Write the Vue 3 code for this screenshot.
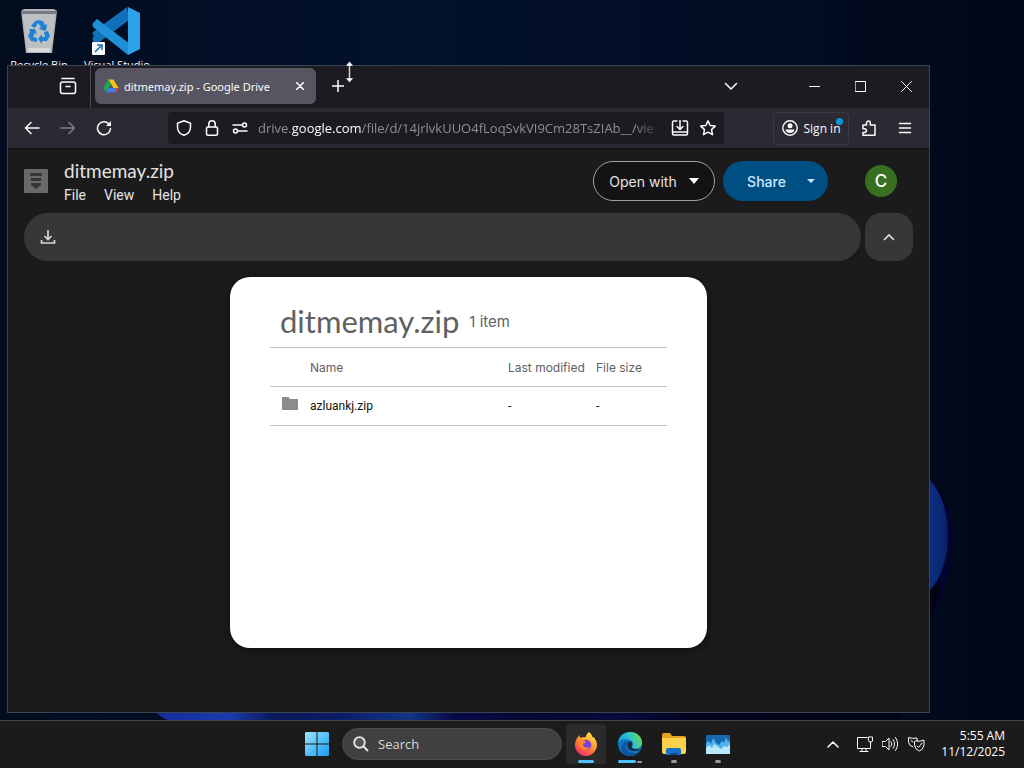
<script setup>
import { ref } from 'vue'

const url = ref('drive.google.com/file/d/14jrlvkUUO4fLoqSvkVI9Cm28TsZIAb__/vie')
const query = ref('')
const menus = ['File', 'View', 'Help']
const rows = [{ name: 'azluankj.zip', modified: '-', size: '-' }]
</script>

<template>
  <div class="screen">
    <main class="desktop">
      <svg class="wallpaper" viewBox="0 0 1024 720" preserveAspectRatio="none" aria-hidden="true">
        <defs>
          <linearGradient id="sky" x1="0" y1="0" x2="1" y2="0">
            <stop offset="0" stop-color="#010c1e" />
            <stop offset="0.4" stop-color="#03112c" />
            <stop offset="0.7" stop-color="#020d24" />
            <stop offset="1" stop-color="#010817" />
          </linearGradient>
          <linearGradient id="petal" x1="0" y1="0" x2="1" y2="0">
            <stop offset="0" stop-color="#0e2f86" />
            <stop offset="0.7" stop-color="#0a2873" />
            <stop offset="1" stop-color="#091b60" />
          </linearGradient>
          <linearGradient id="strip" x1="0" y1="0" x2="1" y2="0">
            <stop offset="0" stop-color="#142a9c" />
            <stop offset="0.1" stop-color="#1a3cae" />
            <stop offset="0.16" stop-color="#0a1858" />
            <stop offset="0.25" stop-color="#0b1d68" />
            <stop offset="0.34" stop-color="#123586" />
            <stop offset="0.4" stop-color="#080a48" />
            <stop offset="0.52" stop-color="#05082e" />
            <stop offset="0.62" stop-color="#070a3c" />
            <stop offset="0.74" stop-color="#02031c" />
            <stop offset="1" stop-color="#010617" />
          </linearGradient>
        </defs>
        <rect width="1024" height="720" fill="url(#sky)" />
        <path d="M924 470C942 492 953 512 953 536C953 570 943 600 928 622Z" fill="#03032f" />
        <path d="M924 588L940 584C938 600 934 612 928 622Z" fill="#01030e" />
        <path d="M924 474C940 488 948 510 948 534C948 558 942 578 928 592Z" fill="url(#petal)" />
        <path d="M155 710H900V720H168Q160 718 155 710Z" fill="url(#strip)" />
      </svg>

      <div class="shortcuts">
        <a class="shortcut" href="#">
          <svg width="48" height="48" viewBox="0 0 48 48" aria-hidden="true">
            <path d="M6 4L9 2H39L42 4L37 46H11Z" fill="#b0b4b8" />
            <path d="M6 4H42L41 7H7Z" fill="#767b80" />
            <path d="M8 7H40L36 45H12Z" fill="#bdc0c3" />
            <path d="M13 41H35L34.500 45H12.500Z" fill="#d6d8da" />
            <g fill="#1e83d8">
              <path d="M19 15L23 13L28 14L30 18L32 17L31 24L24 22L26 20L23 16L20 21L16 19Z" />
              <path d="M14 22L20 22L22 27L20 26L18 30L22 31V35L16 34L13 29L15 25Z" />
              <path d="M29 25L33 24L35 29L32 34L27 34V37L23 32L27 27V30L30 30Z" />
            </g>
          </svg>
          <span>Recycle Bin</span>
        </a>
        <a class="shortcut" href="#">
          <svg width="50" height="48" viewBox="0 0 50 48" aria-hidden="true">
            <path d="M36 0L5 31L1 28Q0 27 1 25L34 1Z" fill="#1473bd" />
            <path d="M35 0L37 13L5 37L1 34Q0 32 1 30Z" fill="#1070b8" />
            <path d="M1 16L5 12L38 37L36 48L1 20Q0 18 1 16Z" fill="#1f8fd8" />
            <path d="M36 0L48 6V42L36 48Z" fill="#2ea3ec" />
            <rect y="35" width="13" height="13" rx="1" fill="#f4f8fc" />
            <path d="M3 45L9 39M5 38H10V43" fill="none" stroke="#1b6db0" stroke-width="1.500" />
          </svg>
          <span>Visual Studio</span>
        </a>
      </div>

      <section class="window" aria-label="Browser">
        <div class="tabbar">
          <button class="ib recent" aria-label="Recent tabs">
            <svg width="18" height="18" viewBox="0 0 18 18" class="ln"><rect x="1.500" y="5" width="15" height="11.500" rx="2" /><path d="M3 1.500H15M7 9.500H11" /></svg>
          </button>
          <div class="tab">
            <svg width="16" height="16" viewBox="0 0 16 16" aria-hidden="true">
              <path d="M5.400 1.500H8L4.500 14L0.500 10Z" fill="#23a455" />
              <path d="M5.400 1.500H10.500L15.500 10H10.500Z" fill="#fbc116" />
              <path d="M0.500 10L3 14.300L8 5.800L5.400 1.500Z" fill="#23a455" />
              <path d="M3 14.300L5.500 10H15.500L13 14.300Z" fill="#3f7bea" />
              <path d="M12 10H15.500L13 14.300Z" fill="#e34133" />
            </svg>
            <span>ditmemay.zip - Google Drive</span>
            <button class="tabclose" aria-label="Close tab">
              <svg width="8" height="8" viewBox="0 0 8 8" class="ln"><path d="M0.500 0.500L7.500 7.500M7.500 0.500L0.500 7.500" /></svg>
            </button>
          </div>
          <button class="ib newtab" aria-label="New tab">
            <svg width="12" height="12" viewBox="0 0 12 12" class="ln"><path d="M6 0V12M0 6H12" /></svg>
          </button>
          <button class="ib alltabs" aria-label="List all tabs">
            <svg width="14" height="8" viewBox="0 0 14 8" class="ln"><path d="M1.500 1.500L7 7L12.500 1.500" /></svg>
          </button>
          <button class="wb" aria-label="Minimize"><svg width="11" height="11" viewBox="0 0 11 11" class="ln thin"><path d="M0.500 5.500H10.500" /></svg></button>
          <button class="wb" aria-label="Maximize"><svg width="11" height="11" viewBox="0 0 11 11" class="ln thin"><rect x="0.500" y="0.500" width="10" height="10" /></svg></button>
          <button class="wb" aria-label="Close"><svg width="11" height="11" viewBox="0 0 11 11" class="ln thin"><path d="M0.500 0.500L10.500 10.500M10.500 0.500L0.500 10.500" /></svg></button>
        </div>

        <div class="navbar">
          <button class="ib" aria-label="Back"><svg width="16" height="16" viewBox="0 0 16 16" class="ln"><path d="M15 8H1.500M7 2.500L1.500 8L7 13.500" /></svg></button>
          <button class="ib dim" aria-label="Forward"><svg width="16" height="16" viewBox="0 0 16 16" class="ln"><path d="M1 8H14.500M9 2.500L14.500 8L9 13.500" /></svg></button>
          <button class="ib" aria-label="Reload"><svg width="16" height="16" viewBox="0 0 16 16" class="ln"><path d="M14.500 8.500A6.500 6.500 0 1 1 12.500 3.500" /><path d="M15 1V6H10Z" fill="#fbfbfe" stroke="none" /></svg></button>
          <div class="urlbar">
            <svg width="16" height="16" viewBox="0 0 16 16" class="ln"><path d="M8 0.800L14.500 3.200V7C14.500 11 12 14 8 15.300C4 14 1.500 11 1.500 7V3.200Z" /></svg>
            <svg width="16" height="16" viewBox="0 0 16 16" class="ln"><rect x="2.500" y="7" width="11" height="8.200" rx="1.500" /><path d="M4.800 7V4A3.200 3.200 0 0 1 11.200 4V7" /></svg>
            <svg width="16" height="16" viewBox="0 0 16 16" class="ln"><circle cx="12.500" cy="5" r="2" /><circle cx="3.500" cy="11" r="2" /><path d="M1 5H10M6 11H15" /></svg>
            <label class="address">
              <span class="ghost" aria-hidden="true">drive.<b>google.com</b>/file/d/14jrlvkUUO4fLoqSvkVI9Cm28TsZIAb__/vie</span>
              <input v-model="url" type="text" aria-label="Address" />
            </label>
            <button class="ub" aria-label="Install app"><svg width="18" height="16" viewBox="0 0 18 16" class="ln"><path d="M6 1H3Q1.500 1 1.500 2.500V13.500Q1.500 15 3 15H15Q16.500 15 16.500 13.500V2.500Q16.500 1 15 1H12M9 0V9M6 6.500L9 9.500L12 6.500M2 12H16" /></svg></button>
            <button class="ub" aria-label="Bookmark"><svg width="16" height="16" viewBox="0 0 16 16" class="ln"><path d="M8 0.900L10.200 5.500L15.200 6.100L11.500 9.600L12.500 14.700L8 12.200L3.500 14.700L4.500 9.600L0.800 6.100L5.800 5.500Z" /></svg></button>
          </div>
          <button class="signin">
            <svg width="16" height="16" viewBox="0 0 16 16" aria-hidden="true"><circle cx="8" cy="8" r="7.200" fill="none" stroke="#fbfbfe" stroke-width="1.400" /><circle cx="8" cy="5.800" r="2.500" fill="#fbfbfe" /><path d="M3.500 9.500H12.500Q11.800 13 8 13T3.500 9.500Z" fill="#fbfbfe" /></svg>
            <span>Sign in</span>
            <i class="dot"></i>
          </button>
          <button class="ib ext" aria-label="Extensions"><svg width="16" height="18" viewBox="0 0 16 18" class="ln"><path d="M2 6H5.500V4A1.900 1.900 0 0 1 9.300 4V6H14V16.300H2V13.500H3.500A1.900 1.900 0 0 0 3.500 9.700H2Z" /></svg></button>
          <button class="ib" aria-label="Menu"><svg width="14" height="12" viewBox="0 0 14 12" class="ln"><path d="M1.500 1.500H12.500M1.500 6H12.500M1.500 10.500H12.500" /></svg></button>
        </div>

        <div class="page">
          <header class="head">
            <svg width="24" height="24" viewBox="0 0 24 24" aria-hidden="true"><rect width="24" height="24" rx="1" fill="#6a6a6d" /><path d="M6 4H18V7H6ZM7 9H17V12H7ZM7 14H17V16L12 20L7 16Z" fill="#37373a" /></svg>
            <div class="names">
              <h1>ditmemay.zip</h1>
              <nav><button v-for="m in menus" :key="m">{{ m }}</button></nav>
            </div>
            <button class="open">Open with
              <svg width="10" height="6" viewBox="0 0 10 6"><path d="M0 0H10L5 6Z" fill="#fff" /></svg>
            </button>
            <div class="share">
              <button class="main">Share</button>
              <button class="more" aria-label="Share options"><svg width="8" height="4" viewBox="0 0 8 4"><path d="M0 0H8L4 4Z" fill="#c8e8ff" /></svg></button>
            </div>
            <button class="avatar" aria-label="Account">C</button>
          </header>

          <div class="tools">
            <div class="bar">
              <button aria-label="Download"><svg width="16" height="16" viewBox="0 0 16 16" class="ln soft"><path d="M8 1V10M4.500 7L8 10.500L11.500 7M1.500 11V14H14.500V11" /></svg></button>
            </div>
            <button class="fold" aria-label="Hide the menus"><svg width="12" height="8" viewBox="0 0 12 8" class="ln soft"><path d="M1 7L6 2L11 7" /></svg></button>
          </div>

          <article class="card">
            <div class="title"><h2>ditmemay.zip</h2><span>1 item</span></div>
            <table>
              <thead>
                <tr><th class="pic"></th><th>Name</th><th class="mod">Last modified</th><th class="size">File size</th></tr>
              </thead>
              <tbody>
                <tr v-for="r in rows" :key="r.name">
                  <td class="pic"><svg width="16" height="14" viewBox="0 0 16 14"><path d="M0 1H6.500L8 3H16V14H0Z" fill="#8b8b8b" /></svg></td>
                  <td>{{ r.name }}</td><td>{{ r.modified }}</td><td>{{ r.size }}</td>
                </tr>
              </tbody>
            </table>
          </article>
        </div>
      </section>

      <svg class="cursor" width="9" height="22" viewBox="0 0 9 22" aria-hidden="true"><path d="M4.500 0.500L8.500 5H5.300V17H8.500L4.500 21.500L0.500 17H3.700V5H0.500Z" fill="#fff" stroke="#111" stroke-width="0.400" /></svg>
    </main>

    <footer class="taskbar">
      <div class="apps">
        <button class="app" aria-label="Start">
          <svg width="24" height="24" viewBox="0 0 24 24">
            <defs><linearGradient id="win" x1="0" y1="0" x2="1" y2="1"><stop offset="0" stop-color="#9be6fe" /><stop offset="1" stop-color="#169cf2" /></linearGradient></defs>
            <path d="M1 0H11.500V11.500H0V1ZM12.500 0H23L24 1V11.500H12.500ZM0 12.500H11.500V24H1L0 23ZM12.500 12.500H24V23L23 24H12.500Z" fill="url(#win)" />
          </svg>
        </button>
        <label class="search">
          <svg width="16" height="16" viewBox="0 0 16 16" aria-hidden="true"><circle cx="6.500" cy="6.500" r="5.300" fill="#555" stroke="#e8e8e8" stroke-width="1.800" /><path d="M10.500 10.500L15 15" stroke="#e8e8e8" stroke-width="2" /></svg>
          <input v-model="query" type="text" placeholder="Search" aria-label="Search" />
        </label>
        <button class="app on" aria-label="Firefox">
          <svg width="24" height="24" viewBox="0 0 24 24">
            <defs><linearGradient id="ffx" x1="0.800" y1="0" x2="0.200" y2="1"><stop offset="0" stop-color="#fff04a" /><stop offset="0.450" stop-color="#ff9a2c" /><stop offset="0.800" stop-color="#ff4a4a" /><stop offset="1" stop-color="#f02d8a" /></linearGradient></defs>
            <path d="M15 0C17 2 18 3 18.500 5C20 5 21 6 21 7C23 10 23.500 13 22.500 16C20.500 21 17 24 12 24C6 24 1 19 1 13C1 10 2 7 4 5L5 3L6.500 6L9 5C10 5 11 5 11.500 5.500C12 3 13 1.500 15 0Z" fill="url(#ffx)" />
            <circle cx="12" cy="13" r="5.300" fill="#7a3fe0" />
            <path d="M4 8C7 8 9 9 12 9.500C12 11 10 11.500 9 12C9 15 12 17 16 15C14 19 7 19 5.500 14Z" fill="#ff8a2a" />
          </svg>
          <i class="run wide"></i>
        </button>
        <button class="app" aria-label="Edge">
          <svg width="24" height="24" viewBox="0 0 24 24">
            <defs><linearGradient id="edg" x1="0" y1="0.600" x2="1" y2="0.300"><stop offset="0" stop-color="#189bdc" /><stop offset="0.500" stop-color="#2bc0d2" /><stop offset="1" stop-color="#6ddc50" /></linearGradient></defs>
            <circle cx="12" cy="12" r="12" fill="#1374c2" />
            <path d="M0 12C0 5 5 0 12 0C19 0 24 5 24 10.500C24 14.500 21 16.500 18 16.500C15.500 16.500 14 15.500 14 14.500C15.500 13 15.500 10 13 8.500C8 6 1 7 0 12Z" fill="url(#edg)" />
            <path d="M8 13C7 18 12 22 20 20.800C17 24 12 25 7.500 23C3 20.500 2 15 5 12C6.500 10 9 9 11 9.500C9.500 10 8.500 11.500 8 13Z" fill="#0d55a0" />
            <path d="M11 10C7 13 10 20 18 19C20 19 22 17.500 22.500 16.500C20 18 13.500 18 13.500 14.500Q15.500 12 13 9.500Z" fill="#1b2a36" />
          </svg>
          <i class="run wide"></i>
          <i class="run behind"></i>
        </button>
        <button class="app" aria-label="File Explorer">
          <svg width="24" height="22" viewBox="0 0 24 22"><path d="M0 2Q0 0 2 0H8L10 3H22Q24 3 24 5V12H0Z" fill="#e2a51c" /><path d="M0 5H24V19Q24 21 22 21H2Q0 21 0 19Z" fill="#fcd14b" /><path d="M4 22V17Q4 15 6 15H17Q19 15 19 17V22Z" fill="#1871c2" /><path d="M8 22V20H16V22Z" fill="#0e4c91" /></svg>
          <i class="run"></i>
        </button>
        <button class="app" aria-label="Performance">
          <svg width="24" height="19" viewBox="0 0 24 19"><rect width="24" height="19" rx="1" fill="#1668ad" /><path d="M0 8L3 6L5 9L7 3L10 8L13 10L16 6L18 8L20 2L22 7L24 5V19H0Z" fill="#4fb2ec" /><path d="M0 13L3 10L6 13L8 9L11 11L15 14L18 11L21 12L24 9V19H0Z" fill="#b8e8fb" /></svg>
          <i class="run"></i>
        </button>
      </div>
      <div class="tray">
        <button aria-label="Hidden icons"><svg width="12" height="8" viewBox="0 0 12 8" class="ln"><path d="M1 7L6 2L11 7" /></svg></button>
        <div class="status">
          <svg width="16" height="16" viewBox="0 0 16 16" class="ln thin"><path d="M10 1.500H0.500V12.500H13.500V8M5 12.500V15.500M9 12.500V15.500M3 15.500H11M11.500 1H15.500V5Q15.500 6 13.500 6T11.500 5ZM13.500 6V10" /></svg>
          <svg width="17" height="16" viewBox="0 0 17 16" class="ln thin"><path d="M0.500 5.500H3.500L7 2V14L3.500 10.500H0.500ZM9 5.500Q10.800 8 9 10.500M11.200 3.500Q14 8 11.200 12.500M13.500 1.500Q18 8 13.500 14.500" /></svg>
          <svg width="17" height="16" viewBox="0 0 17 16" class="ln thin"><path d="M9 5V2Q5 3 0.500 1.500V6Q1 10 5 11M8 5Q12 6 16 4V9Q15 14 11.500 15Q7 14 6.500 9V6ZM3 4.500L5 6M9 10L10.500 11.500L14 7" /></svg>
        </div>
        <time>5:55 AM<br />11/12/2025</time>
      </div>
    </footer>
  </div>
</template>

<style>
body { margin: 0; background: #010c1e; }
</style>

<style scoped>
* { box-sizing: border-box; }
button, input { font: inherit; color: inherit; background: none; border: 0; padding: 0; margin: 0; }
button { display: flex; align-items: center; justify-content: center; flex: none; }
svg { flex: none; display: block; }
h1, h2 { margin: 0; font-weight: 400; }
.ln { fill: none; stroke: #fbfbfe; stroke-width: 1.500; stroke-linecap: round; stroke-linejoin: round; }
.thin { stroke-width: 1; }
.soft { stroke: #dcdcdc; stroke-linecap: butt; stroke-linejoin: miter; stroke-width: 1.600; }
.screen { height: 100vh; display: flex; flex-direction: column; overflow: hidden; font-family: "Open Sans", "Noto Sans", sans-serif; font-size: 12px; color: #fbfbfe; }
.desktop { flex: 1; position: relative; min-height: 0; overflow: hidden; }
.wallpaper { position: absolute; inset: 0; width: 100%; height: 100%; }
.shortcuts { position: relative; display: flex; padding-top: 7px; }
.shortcut { width: 78px; display: flex; flex-direction: column; align-items: center; gap: 2px; color: #fff; text-decoration: none; font-size: 11px; line-height: 16px; white-space: nowrap; }

.window { position: absolute; left: 7px; top: 65px; right: 94px; bottom: 7px; border: 1px solid #3b4450; background: #1b1b1b; display: flex; flex-direction: column; overflow: hidden; }
.tabbar { height: 42px; flex: none; display: flex; align-items: center; padding-left: 42px; background: #1c1b22; }
.ib { width: 36px; height: 36px; }
.dim { opacity: 0.4; }
.tab { width: 226px; height: 42px; flex: none; display: flex; align-items: center; gap: 5px; padding: 0 6px 2px 12px; border-left: 1px solid #4a4951; position: relative; font-family: "Noto Sans", "Open Sans", sans-serif; font-size: 11px; }
.tab::before { content: ""; position: absolute; inset: 2px 0 4px 4px; border-radius: 6px; background: #575561; }
.tab > * { position: relative; }
.tab span { flex: 1; white-space: nowrap; }
.tabclose { width: 20px; height: 20px; }
.tabbar .ib, .tabbar .wb { padding-bottom: 2px; }
.tabbar .recent { margin-right: 4px; }
.tabbar .newtab { margin-left: 4px; }
.alltabs { margin: 0 42px 0 auto; }
.wb { width: 46px; height: 42px; }

.navbar { height: 41px; flex: none; display: flex; align-items: center; padding: 0 6px; background: #2b2a33; border-bottom: 1px solid #111116; }
.urlbar { flex: 1; min-width: 0; height: 32px; margin: 0 49px 0 46px; padding: 0 8px; display: flex; align-items: center; gap: 12px; border-radius: 4px; background: #1c1b22; }
.address { flex: 1; min-width: 0; margin: 0 -4px 0 -2px; position: relative; overflow: hidden; font-size: 13px; line-height: 20px; color: #8f8e96; mask-image: linear-gradient(to right, #000 93%, transparent); }
.ghost { display: block; white-space: nowrap; }
.ghost b { font-weight: 400; color: #fbfbfe; }
.address input { position: absolute; inset: 0; width: 100%; color: transparent; caret-color: #fff; outline: 0; }
.ub { height: 28px; }
.ub + .ub { margin-left: -1px; }
.signin { width: 76px; height: 33px; gap: 6px; position: relative; border: 1px solid #3b3a44; border-radius: 4px; }
.dot { position: absolute; right: 5px; top: 5px; width: 7px; height: 7px; border-radius: 50%; background: #0d96dc; }
.ext { margin-left: 2px; }

.page { flex: 1; min-height: 0; display: flex; flex-direction: column; padding: 12px 16px 64px; font-family: Inter, "Open Sans", sans-serif; color: #e3e3e3; }
.head { display: flex; align-items: center; height: 40px; }
.names { flex: 1; margin-left: 16px; padding-top: 3px; }
h1 { font-size: 19px; line-height: 24px; font-family: Lato, sans-serif; }
nav { display: flex; gap: 18px; font-family: Roboto, sans-serif; font-size: 14px; line-height: 24px; }
.open { width: 122px; height: 40px; gap: 12px; border: 1px solid #a0a2a0; border-radius: 20px; background: #131314; font-size: 14px; }
.share { display: flex; width: 105px; height: 40px; margin: 0 37px 0 8px; border-radius: 20px; background: #004f83; overflow: hidden; font-size: 14px; font-weight: 500; color: #c8e8ff; }
.main { width: 74px; padding-left: 13px; }
.more { flex: 1; padding-right: 4px; border-left: 1px solid #17426a; }
.avatar { width: 32px; height: 32px; margin-right: 16px; border-radius: 50%; background: #386f20; color: #fff; font-size: 17px; font-weight: 500; }
.tools { display: flex; gap: 4px; margin-top: 12px; }
.bar { flex: 1; height: 48px; padding-left: 8px; border-radius: 24px; background: #373737; display: flex; align-items: center; }
.bar button { width: 32px; height: 32px; }
.fold { width: 48px; height: 48px; border-radius: 16px; background: #373737; }
.card { flex: 1; width: 52%; min-width: 477px; align-self: center; margin-top: 16px; padding: 0 40px; border-radius: 20px; background: #fff; color: #616161; box-shadow: 0 2px 8px #0008; }
.title { height: 70px; padding: 18px 0 0 10px; display: flex; align-items: center; gap: 10px; font-size: 15px; }
h2 { font-family: Lato, sans-serif; font-size: 31px; line-height: 40px; }
table { width: 100%; border-collapse: collapse; table-layout: fixed; font-size: 12px; }
th, td { height: 39px; padding: 0; text-align: left; font-weight: 400; border-top: 1px solid #c4c4c4; border-bottom: 1px solid #c4c4c4; }
td { color: #111; font-family: Roboto, sans-serif; }
.pic { width: 40px; }
td.pic { padding: 0 0 6px 12px; }
.mod { width: 88px; }
.size { width: 71px; }
.cursor { position: absolute; left: 345px; top: 61px; }

.taskbar { height: 48px; flex: none; display: grid; grid-template-columns: 1fr auto 1fr; padding-bottom: 1px; background: #1b1b1b; border-top: 1px solid #454545; color: #fff; }
.apps { grid-column: 2; display: flex; align-items: center; gap: 4px; padding-left: 11px; }
.app { width: 40px; height: 40px; border-radius: 4px; position: relative; }
.on { background: #2b2b2b; }
.run { position: absolute; bottom: 1px; left: 17px; width: 6px; height: 3px; border-radius: 2px; background: #9a9a9a; }
.run.wide { left: 12px; width: 16px; background: #4cc2ff; }
.run.wide:nth-last-child(2) { left: 8px; width: 18px; }
.run.behind { left: 27px; width: 5px; height: 2px; }
.search { width: 220px; height: 32px; margin-left: 1px; display: flex; align-items: center; gap: 9px; padding: 0 12px 0 10px; border: 1px solid #4c4c4c; border-radius: 16px; background: #404040; font-size: 13px; }
.search input { flex: 1; min-width: 0; outline: 0; }
.search input::placeholder { color: #d8d8d8; opacity: 1; }
.tray { grid-column: 3; justify-self: end; display: flex; align-items: center; padding-right: 19px; }
.tray button { width: 24px; height: 40px; margin-right: 12px; }
.status { display: flex; gap: 9px; margin-right: 16px; }
time { font-size: 12px; line-height: 16px; text-align: right; }
</style>
